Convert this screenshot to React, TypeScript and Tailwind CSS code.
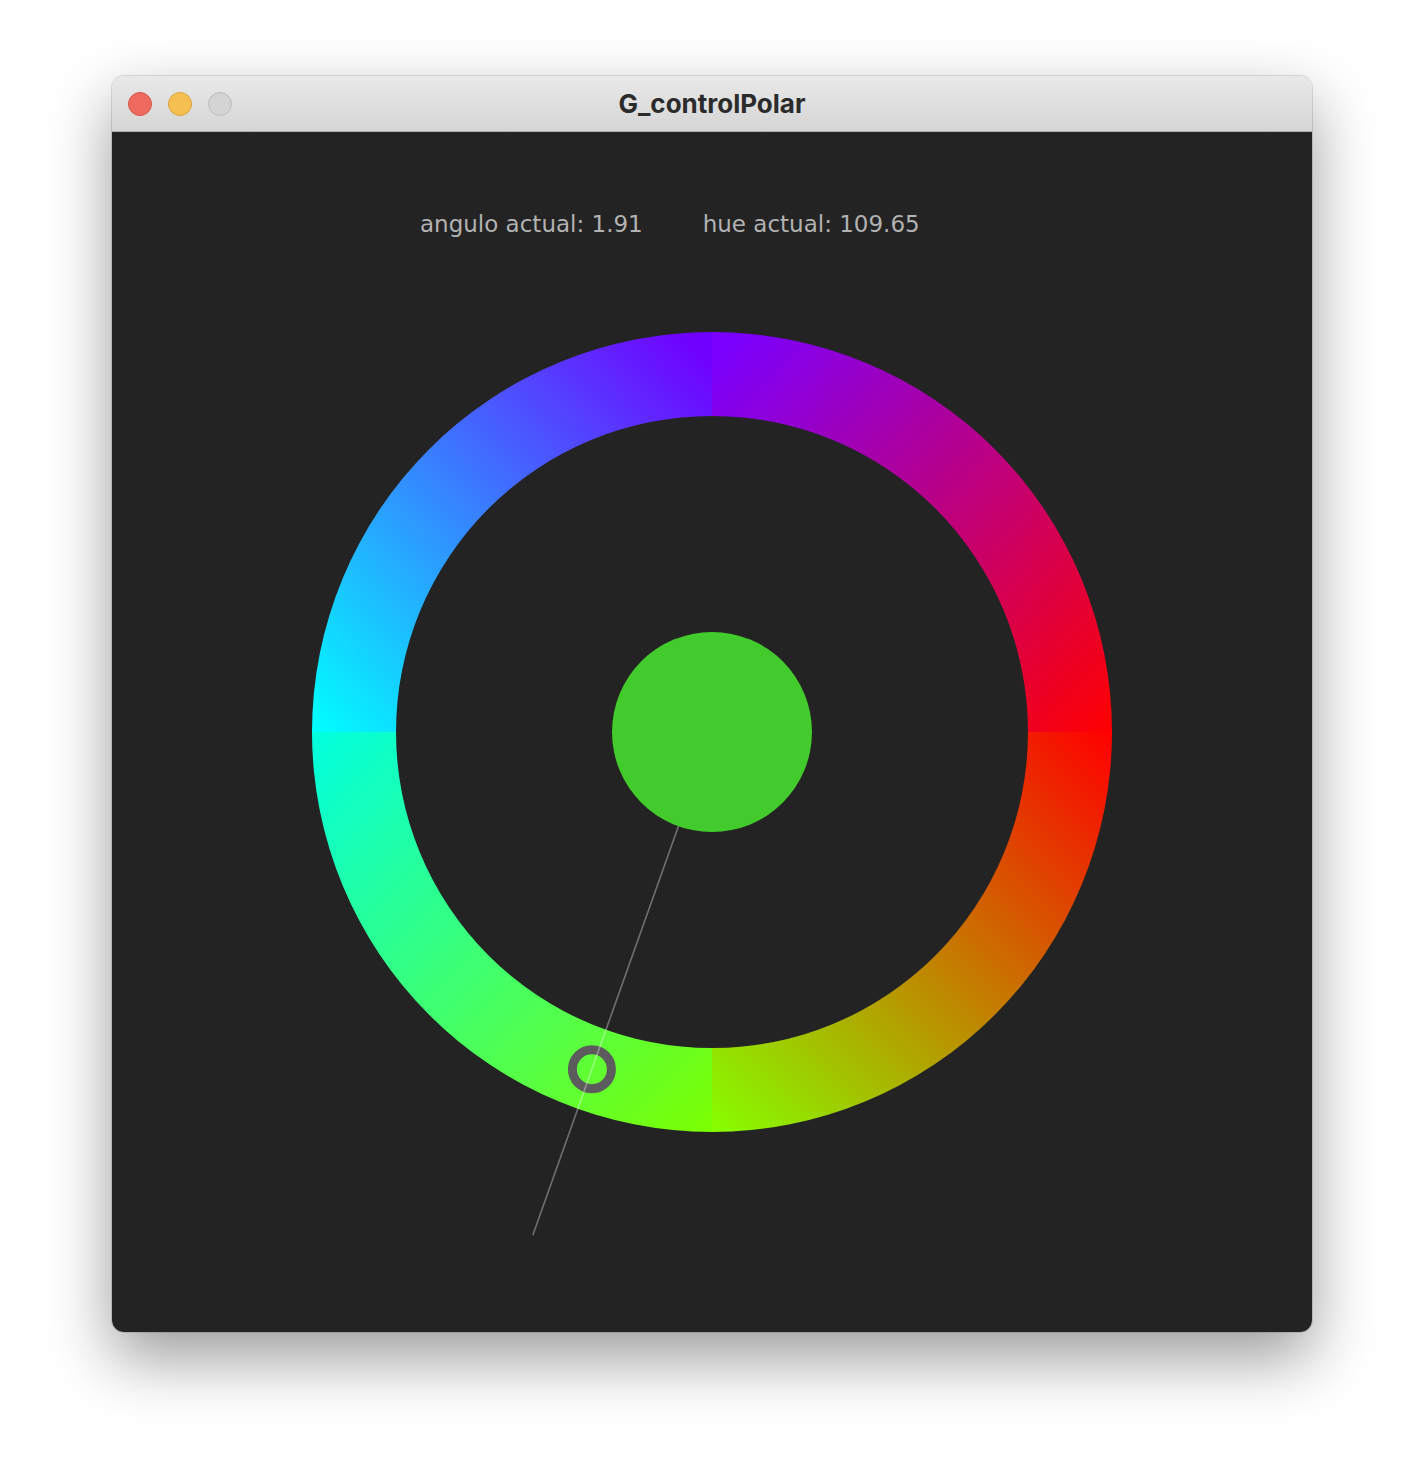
import React from "react";

const C = 600;
const RO = 400;
const RI = 316;
const ANG = (109.6 * Math.PI) / 180;
const pt = (r: number) => [C + r * Math.cos(ANG), C + r * Math.sin(ANG)];

function Ring() {
  const [lx1, ly1] = pt(0);
  const [lx2, ly2] = pt(534);
  const [hx, hy] = pt(358);
  return (
    <svg className="absolute inset-0" width={1200} height={1200} viewBox="0 0 1200 1200">
      <defs>
        <linearGradient id="gTR" gradientUnits="userSpaceOnUse" x1="600" y1="230" x2="1000" y2="600">
          <stop offset="0" stopColor="#7a00ff" />
          <stop offset="1" stopColor="#ff0000" />
        </linearGradient>
        <linearGradient id="gBR" gradientUnits="userSpaceOnUse" x1="1000" y1="600" x2="600" y2="1000">
          <stop offset="0" stopColor="#ff0000" />
          <stop offset="1" stopColor="#86ff00" />
        </linearGradient>
        <linearGradient id="gBL" gradientUnits="userSpaceOnUse" x1="600" y1="1000" x2="200" y2="600">
          <stop offset="0" stopColor="#7cff00" />
          <stop offset="1" stopColor="#00ffe0" />
        </linearGradient>
        <linearGradient id="gTL" gradientUnits="userSpaceOnUse" x1="200" y1="600" x2="600" y2="230">
          <stop offset="0" stopColor="#00ffff" />
          <stop offset="1" stopColor="#7000ff" />
        </linearGradient>
      </defs>
      <path d={`M 600 200 A ${RO} ${RO} 0 0 1 1000 600 L ${C + RI} 600 A ${RI} ${RI} 0 0 0 600 ${C - RI} Z`} fill="url(#gTR)" />
      <path d={`M 1000 600 A ${RO} ${RO} 0 0 1 600 1000 L 600 ${C + RI} A ${RI} ${RI} 0 0 0 ${C + RI} 600 Z`} fill="url(#gBR)" />
      <path d={`M 600 1000 A ${RO} ${RO} 0 0 1 200 600 L ${C - RI} 600 A ${RI} ${RI} 0 0 0 600 ${C + RI} Z`} fill="url(#gBL)" />
      <path d={`M 200 600 A ${RO} ${RO} 0 0 1 600 200 L 600 ${C - RI} A ${RI} ${RI} 0 0 0 ${C - RI} 600 Z`} fill="url(#gTL)" />
      <circle cx={hx} cy={hy} r={19.5} fill="none" stroke="#5c5c5c" strokeWidth={9} />
      <line x1={lx1} y1={ly1} x2={lx2} y2={ly2} stroke="rgba(255,255,255,0.35)" strokeWidth={1.6} />
      <circle cx={C} cy={C} r={100} fill="#43cb2d" />
    </svg>
  );
}

export default function App() {
  return (
    <div className="min-h-[1480px] w-[1424px] bg-white pt-[76px] pl-[112px]">
      <div className="w-[1200px] overflow-hidden rounded-[12px] shadow-[0_26px_64px_rgba(0,0,0,0.4),0_0_0_1px_rgba(0,0,0,0.12)]">
        <div className="grid h-[56px] grid-cols-[1fr_auto_1fr] items-center border-b border-[#acacac] bg-gradient-to-b from-[#e9e9e9] to-[#d5d5d5]">
          <div className="flex items-center gap-[16px] pl-[16px]">
            <span className="h-[24px] w-[24px] rounded-full border border-[#d9554a] bg-[#ee6a5f]" />
            <span className="h-[24px] w-[24px] rounded-full border border-[#dba23c] bg-[#f5c04f]" />
            <span className="h-[24px] w-[24px] rounded-full border border-[#bdbdbd] bg-[#d4d4d4]" />
          </div>
          <div className="font-['Inter',sans-serif] text-[26px] font-bold leading-[32px] text-[#2b2b2b]">G_controlPolar</div>
          <div />
        </div>
        <div className="relative h-[1200px] bg-[#232323]">
          <Ring />
          <div className="relative flex gap-[60px] pl-[308px] pt-[78px] font-['DejaVu_Sans',sans-serif] text-[23px] leading-[28px] text-[#b2b2b2]">
            <span>angulo actual: 1.91</span>
            <span>hue actual: 109.65</span>
          </div>
        </div>
      </div>
    </div>
  );
}
